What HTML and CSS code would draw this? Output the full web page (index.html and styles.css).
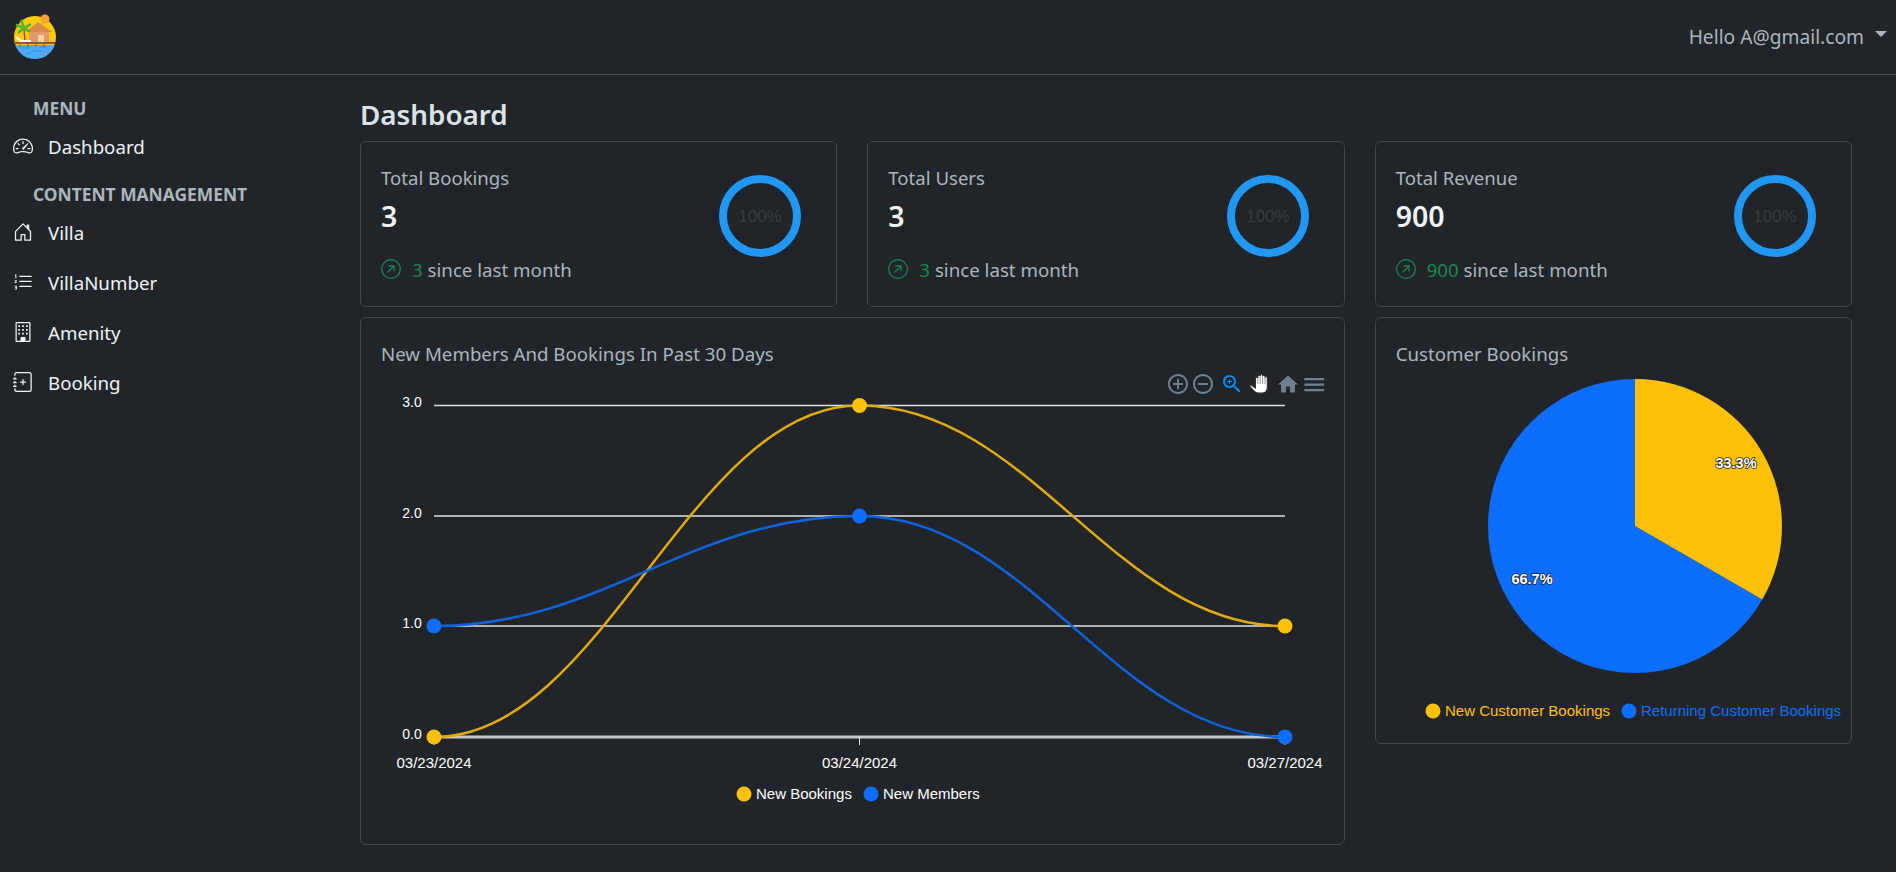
FILE: index.html
```html
<!DOCTYPE html>
<html lang="en">
<head>
    <meta charset="UTF-8">
    <meta name="viewport" content="width=device-width, initial-scale=1.0">
    <title>Dashboard</title>
    <link rel="stylesheet" href="styles.css">
</head>
<body>
    <header class="navbar">
        <svg class="logo" viewBox="0 0 46 46" width="46" height="46">
            <circle cx="23" cy="24" r="21" fill="#ffc90b"/>
            <path d="M3.200 32h39.600A21 21 0 0 1 3.200 32Z" fill="#4ea8f5"/>
            <path d="M9 35h8M20 38h10M28 34h7M14 40h5" stroke="#3a8fdc" stroke-width="1"/>
            <circle cx="33" cy="6" r="4.500" fill="#f7a531"/>
            <path d="M14 19 26 9 40 19Z" fill="#d98a4b"/>
            <rect x="17" y="19" width="20" height="11" fill="#e09a62"/>
            <rect x="26" y="22" width="6" height="8" fill="#fbd3a4"/>
            <rect x="2" y="29" width="41" height="2" fill="#8e5a34"/>
            <path d="M8 31v3M16 31v3M24 31v3M32 31v3" stroke="#8e5a34" stroke-width="1"/>
            <path d="M13 28 12 17" stroke="#8e5a34" stroke-width="1.500"/>
            <path d="M12 15 4 12M12 15 6 20M12 15 19 11M12 15 9 7M12 15 18 19" stroke="#4fb52d" stroke-width="2.500"/>
            <path d="M4 24 9 28H19" stroke="#fff" stroke-width="2" fill="none"/>
        </svg>
        <div class="user-menu">
            <span>Hello A@gmail.com</span>
            <i class="caret"></i>
        </div>
    </header>

    <div class="layout">
        <aside class="sidebar">
            <div class="menu-title first">MENU</div>
            <a class="menu-link">
                <svg class="menu-icon" viewBox="0 0 16 16"><path d="M8 4a.5.5 0 0 1 .5.5V6a.5.5 0 0 1-1 0V4.500A.5.5 0 0 1 8 4zM3.732 5.732a.5.5 0 0 1 .707 0l.915.914a.5.5 0 1 1-.708.708l-.914-.915a.5.5 0 0 1 0-.707zM2 10a.5.5 0 0 1 .5-.5h1.586a.5.5 0 0 1 0 1H2.500A.5.5 0 0 1 2 10zm9.500 0a.5.5 0 0 1 .5-.5h1.500a.5.5 0 0 1 0 1H12a.5.5 0 0 1-.5-.5zm.754-4.246a.389.389 0 0 0-.527-.02L7.547 9.310a.91.91 0 1 0 1.302 1.258l3.434-4.297a.389.389 0 0 0-.029-.518z"/><path fill-rule="evenodd" d="M0 10a8 8 0 1 1 15.547 2.661c-.442 1.253-1.845 1.602-2.932 1.250C11.309 13.488 9.475 13 8 13c-1.474 0-3.310.488-4.615.911-1.087.352-2.490.003-2.932-1.250A7.988 7.988 0 0 1 0 10zm8-7a7 7 0 0 0-6.603 9.329c.203.575.923.876 1.680.630C4.397 12.533 6.358 12 8 12s3.604.532 4.923.960c.757.245 1.477-.056 1.680-.631A7 7 0 0 0 8 3z"/></svg>
                Dashboard
            </a>
            <div class="menu-title">CONTENT MANAGEMENT</div>
            <a class="menu-link">
                <svg class="menu-icon" viewBox="0 0 16 16"><path d="M8.354 1.146a.5.5 0 0 0-.708 0l-6 6A.5.5 0 0 0 1.500 7.500v7a.5.5 0 0 0 .5.5h4.500a.5.5 0 0 0 .5-.5v-4h2v4a.5.5 0 0 0 .5.5H14a.5.5 0 0 0 .5-.5v-7a.5.5 0 0 0-.146-.354L13 5.793V2.500a.5.5 0 0 0-.5-.5h-1a.5.5 0 0 0-.5.5v1.293L8.354 1.146zM2.500 14V7.707l5.500-5.500 5.500 5.500V14H10v-4a.5.5 0 0 0-.5-.5h-3a.5.5 0 0 0-.5.5v4H2.500z"/></svg>
                Villa
            </a>
            <a class="menu-link">
                <svg class="menu-icon" viewBox="0 0 16 16"><path d="M5 11.500a.5.5 0 0 1 .5-.5h9a.5.5 0 0 1 0 1h-9a.5.5 0 0 1-.5-.5zm0-4a.5.5 0 0 1 .5-.5h9a.5.5 0 0 1 0 1h-9a.5.5 0 0 1-.5-.5zm0-4a.5.5 0 0 1 .5-.5h9a.5.5 0 0 1 0 1h-9a.5.5 0 0 1-.5-.5z"/><path d="M1.700 2h1v3h-.8V3H1.500ZM1.300 6.500h1.800v.7l-1 1h1v.6H1.300v-.6l1-1h-1ZM1.300 11h1.800v2.900H1.300v-.6h1V12.700h-.7V12.200h.7v-.6h-1Z"/></svg>
                VillaNumber
            </a>
            <a class="menu-link">
                <svg class="menu-icon" viewBox="0 0 16 16"><path d="M3 0h10a1 1 0 0 1 1 1v14a1 1 0 0 1-1 1H3a1 1 0 0 1-1-1V1a1 1 0 0 1 1-1zm0 1v14h3v-2.500a.5.5 0 0 1 .5-.5h3a.5.5 0 0 1 .5.5V15h3V1H3z"/><path d="M4.200 2.500h1.400v1.400H4.200zM7.300 2.500h1.400v1.400H7.300zM10.400 2.500h1.400v1.400h-1.400zM4.200 5.500h1.400v1.400H4.200zM7.300 5.500h1.400v1.400H7.300zM10.400 5.500h1.400v1.400h-1.400zM4.200 8.500h1.400v1.400H4.200zM7.300 8.500h1.400v1.400H7.300zM10.400 8.500h1.400v1.400h-1.400z"/></svg>
                Amenity
            </a>
            <a class="menu-link">
                <svg class="menu-icon" viewBox="0 0 16 16"><path d="M8 5.500a.5.5 0 0 1 .5.5v1.500H10a.5.5 0 0 1 0 1H8.500V10a.5.5 0 0 1-1 0V8.500H6a.5.5 0 0 1 0-1h1.500V6a.5.5 0 0 1 .5-.5z"/><path d="M3 0h10a2 2 0 0 1 2 2v12a2 2 0 0 1-2 2H3a2 2 0 0 1-2-2v-1h1v1a1 1 0 0 0 1 1h10a1 1 0 0 0 1-1V2a1 1 0 0 0-1-1H3a1 1 0 0 0-1 1v1H1V2a2 2 0 0 1 2-2z"/><path d="M1 5v-.5a.5.5 0 0 1 1 0V5h.5a.5.5 0 0 1 0 1h-2a.5.5 0 0 1 0-1H1zm0 3v-.5a.5.5 0 0 1 1 0V8h.5a.5.5 0 0 1 0 1h-2a.5.5 0 0 1 0-1H1zm0 3v-.5a.5.5 0 0 1 1 0v.5h.5a.5.5 0 0 1 0 1h-2a.5.5 0 0 1 0-1H1z"/></svg>
                Booking
            </a>
        </aside>

        <main class="content">
            <h1>Dashboard</h1>
            <div class="card-grid">
                <section class="card stat-card">
                    <div>
                        <div class="stat-title">Total Bookings</div>
                        <div class="stat-value">3</div>
                        <div class="stat-trend">
                            <svg class="trend-icon" viewBox="0 0 16 16"><path fill-rule="evenodd" d="M1 8a7 7 0 1 0 14 0A7 7 0 0 0 1 8zm15 0A8 8 0 1 1 0 8a8 8 0 0 1 16 0zM5.854 10.803a.5.5 0 1 1-.708-.707L9.243 6H6.475a.5.5 0 1 1 0-1h3.975a.5.5 0 0 1 .5.5v3.975a.5.5 0 1 1-1 0V6.707l-4.096 4.096z"/></svg>
                            <span><span class="trend-num">3</span> since last month</span>
                        </div>
                    </div>
                    <svg class="ring" viewBox="0 0 82 82"><circle cx="41" cy="41" r="37"/><text x="41" y="47">100%</text></svg>
                </section>
                <section class="card stat-card">
                    <div>
                        <div class="stat-title">Total Users</div>
                        <div class="stat-value">3</div>
                        <div class="stat-trend">
                            <svg class="trend-icon" viewBox="0 0 16 16"><path fill-rule="evenodd" d="M1 8a7 7 0 1 0 14 0A7 7 0 0 0 1 8zm15 0A8 8 0 1 1 0 8a8 8 0 0 1 16 0zM5.854 10.803a.5.5 0 1 1-.708-.707L9.243 6H6.475a.5.5 0 1 1 0-1h3.975a.5.5 0 0 1 .5.5v3.975a.5.5 0 1 1-1 0V6.707l-4.096 4.096z"/></svg>
                            <span><span class="trend-num">3</span> since last month</span>
                        </div>
                    </div>
                    <svg class="ring" viewBox="0 0 82 82"><circle cx="41" cy="41" r="37"/><text x="41" y="47">100%</text></svg>
                </section>
                <section class="card stat-card">
                    <div>
                        <div class="stat-title">Total Revenue</div>
                        <div class="stat-value">900</div>
                        <div class="stat-trend">
                            <svg class="trend-icon" viewBox="0 0 16 16"><path fill-rule="evenodd" d="M1 8a7 7 0 1 0 14 0A7 7 0 0 0 1 8zm15 0A8 8 0 1 1 0 8a8 8 0 0 1 16 0zM5.854 10.803a.5.5 0 1 1-.708-.707L9.243 6H6.475a.5.5 0 1 1 0-1h3.975a.5.5 0 0 1 .5.5v3.975a.5.5 0 1 1-1 0V6.707l-4.096 4.096z"/></svg>
                            <span><span class="trend-num">900</span> since last month</span>
                        </div>
                    </div>
                    <svg class="ring" viewBox="0 0 82 82"><circle cx="41" cy="41" r="37"/><text x="41" y="47">100%</text></svg>
                </section>

                <section class="card chart-card">
                    <div class="chart-title">New Members And Bookings In Past 30 Days</div>
                    <svg class="chart" viewBox="361 370 983 473" width="983" height="473">
                        <g class="grid">
                            <line x1="434" x2="1285" y1="405.500" y2="405.500"/>
                            <line x1="434" x2="1285" y1="516" y2="516"/>
                            <line x1="434" x2="1285" y1="626" y2="626"/>
                        </g>
                        <line class="axis" x1="434" x2="1285" y1="737" y2="737"/>
                        <g class="tick">
                            <line x1="434" x2="434" y1="737" y2="745"/>
                            <line x1="859.500" x2="859.500" y1="737" y2="745"/>
                            <line x1="1285" x2="1285" y1="737" y2="745"/>
                        </g>
                        <g class="chart-text y-labels">
                            <text x="412" y="407">3.0</text>
                            <text x="412" y="518">2.0</text>
                            <text x="412" y="628">1.0</text>
                            <text x="412" y="739">0.0</text>
                        </g>
                        <g class="chart-text x-labels">
                            <text x="434" y="768">03/23/2024</text>
                            <text x="859.500" y="768">03/24/2024</text>
                            <text x="1285" y="768">03/27/2024</text>
                        </g>
                        <path class="line yellow" d="M434 737C604 737 689 405.500 859.500 405.500C1030 405.500 1115 626 1285 626"/>
                        <path class="line blue" d="M434 626C604 626 689 516 859.500 516C1030 516 1115 737 1285 737"/>
                        <circle class="dot-blue" cx="434" cy="626" r="7.500"/>
                        <circle class="dot-blue" cx="859.500" cy="516" r="7.500"/>
                        <circle class="dot-blue" cx="1285" cy="737" r="7.500"/>
                        <circle class="dot-yellow" cx="434" cy="737" r="7.500"/>
                        <circle class="dot-yellow" cx="859.500" cy="405.500" r="7.500"/>
                        <circle class="dot-yellow" cx="1285" cy="626" r="7.500"/>

                        <circle class="dot-yellow" cx="744" cy="794" r="7.500"/>
                        <text class="chart-text" x="756" y="799">New Bookings</text>
                        <circle class="dot-blue" cx="871" cy="794" r="7.500"/>
                        <text class="chart-text" x="883" y="799">New Members</text>

                        <g class="toolbar">
                            <g transform="translate(1166 372)"><path d="M13 7h-2v4H7v2h4v4h2v-4h4v-2h-4V7zm-1-5C6.480 2 2 6.480 2 12s4.480 10 10 10 10-4.480 10-10S17.520 2 12 2zm0 18c-4.410 0-8-3.590-8-8s3.590-8 8-8 8 3.590 8 8-3.590 8-8 8z"/></g>
                            <g transform="translate(1191 372)"><path d="M7 11v2h10v-2H7zm5-9C6.480 2 2 6.480 2 12s4.480 10 10 10 10-4.480 10-10S17.520 2 12 2zm0 18c-4.410 0-8-3.590-8-8s3.590-8 8-8 8 3.590 8 8-3.590 8-8 8z"/></g>
                            <g transform="translate(1220 372)" class="tool-active"><path d="M15.500 14h-.79l-.28-.27C15.410 12.590 16 11.110 16 9.500 16 5.910 13.090 3 9.500 3S3 5.910 3 9.500 5.910 16 9.500 16c1.610 0 3.090-.59 4.230-1.570l.27.28v.79l5 4.990L20.490 19l-4.990-5zm-6 0C7.010 14 5 11.990 5 9.500S7.010 5 9.500 5 14 7.010 14 9.500 11.990 14 9.500 14z"/><path d="M12 10h-2v2H9v-2H7V9h2V7h1v2h2v1z"/></g>
                            <g transform="translate(1276 372.500)"><path d="M10 20v-6h4v6h5v-8h3L12 3 2 12h3v8z"/></g>
                            <g transform="translate(1301 371.500) scale(1.100)"><path d="M3 18h18v-2H3v2zm0-5h18v-2H3v2zm0-7v2h18V6H3z"/></g>
                        </g>
                        <g transform="translate(1250 374) scale(1.200 1)">
                            <path class="hand" d="M1 11 4.500 14V4C4.500 3 6.500 3 6.500 4V2C6.500 1 8.500 1 8.500 2V1C8.500 0 10.500 0 10.500 1V2C10.500 1 12.500 1 12.500 2V3.500C12.500 2.500 14.500 2.500 14.500 3.500V13C14.500 16 13 19 10 19H7C5 19 4 18 3 16.500L.3 13C-.5 12 .2 10.500 1 11Z"/>
                            <path class="hand-line" d="M6.500 4V10M8.500 2V10M10.500 2V10M12.500 3V10"/>
                        </g>
                    </svg>
                </section>

                <section class="card pie-card">
                    <div class="chart-title">Customer Bookings</div>
                    <svg class="chart" viewBox="1376 370 475 372" width="475" height="372">
                        <path fill="#0d6efd" d="M1635 526V379A147 147 0 1 0 1762.300 599.500Z"/>
                        <path fill="#ffc107" d="M1635 526V379A147 147 0 0 1 1762.300 599.500Z"/>
                        <text class="pie-label" x="1736" y="468">33.3%</text>
                        <text class="pie-label" x="1532" y="584">66.7%</text>
                        <circle class="dot-yellow" cx="1433" cy="711" r="7.500"/>
                        <text class="pie-legend legend-yellow" x="1445" y="716">New Customer Bookings</text>
                        <circle class="dot-blue" cx="1629" cy="711" r="7.500"/>
                        <text class="pie-legend legend-blue" x="1641" y="716">Returning Customer Bookings</text>
                    </svg>
                </section>
            </div>
        </main>
    </div>
</body>
</html>
```

FILE: styles.css
```css
body {
    margin: 0;
    background-color: #212529;
    color: #dee2e6;
    font-family: "Noto Sans", "Open Sans", sans-serif;
    height: 872px;
    overflow: hidden;
}

/* top bar */
.navbar {
    height: 74px;
    border-bottom: 1px solid #495057;
    display: flex;
    align-items: center;
    justify-content: space-between;
    padding: 0 9px 0 12px;
}
.logo {
    display: block;
    margin-bottom: 2px;
}
.user-menu {
    display: flex;
    align-items: center;
    color: #adb5bd;
    font-size: 19.200px;
    margin-bottom: 2px;
}
.caret {
    width: 0;
    height: 0;
    margin-left: 11px;
    margin-bottom: 4px;
    border-top: 6px solid #adb5bd;
    border-left: 6px solid transparent;
    border-right: 6px solid transparent;
}

.layout {
    display: flex;
}

/* sidebar */
.sidebar {
    width: 360px;
    flex-shrink: 0;
    box-sizing: border-box;
    padding-left: 13px;
}
.menu-title {
    font-size: 17.400px;
    font-weight: 700;
    color: #adb5bd;
    padding-left: 20px;
    line-height: 22px;
    margin-top: 12px;
}
.menu-title.first {
    margin-top: 22px;
}
.menu-link {
    display: flex;
    align-items: center;
    height: 50px;
    font-size: 18.700px;
    color: #f0f3f5;
}
.menu-title + .menu-link {
    margin-top: 2px;
}
.menu-icon {
    width: 20px;
    height: 20px;
    fill: currentColor;
    margin-right: 15px;
    flex-shrink: 0;
}

/* main area */
.content {
    width: 1492px;
}
h1 {
    margin: 0;
    box-sizing: border-box;
    height: 66px;
    padding-top: 13px;
    font-size: 27.800px;
    font-weight: 600;
    line-height: 52px;
    color: #dee2e6;
}
.card-grid {
    display: grid;
    grid-template-columns: repeat(3, 1fr);
    column-gap: 30px;
    row-gap: 10px;
    align-items: start;
}
.card {
    border: 1px solid #43474c;
    border-radius: 6px;
    box-sizing: border-box;
}
.stat-card {
    height: 166px;
    display: flex;
    justify-content: space-between;
    padding: 20px 35px 0 20px;
}
.stat-title {
    font-size: 18.600px;
    line-height: 32px;
    color: #adb5bd;
}
.stat-value {
    font-size: 28.500px;
    font-weight: 600;
    line-height: 44px;
    color: #f0f3f5;
}
.stat-trend {
    display: flex;
    align-items: center;
    margin-top: 14px;
    height: 34px;
    font-size: 18.700px;
    color: #adb5bd;
}
.trend-icon {
    width: 20px;
    height: 20px;
    fill: #198754;
    margin-right: 11px;
}
.trend-num {
    color: #198754;
}
.ring {
    width: 82px;
    height: 82px;
    margin-top: 13px;
}
.ring circle {
    fill: none;
    stroke: #2196f3;
    stroke-width: 8;
}
.ring text {
    font-family: "Liberation Sans", sans-serif;
    font-size: 17px;
    text-anchor: middle;
    fill: #373b40;
}

/* charts */
.chart-card {
    grid-column: span 2;
    height: 528px;
}
.pie-card {
    height: 427px;
}
.chart-title {
    height: 52px;
    box-sizing: border-box;
    padding: 20px 0 0 20px;
    font-size: 18.700px;
    line-height: 32px;
    color: #adb5bd;
}
.chart {
    display: block;
}
.grid line {
    stroke: #e0e0e0;
    stroke-width: 1.500;
}
.axis {
    stroke: #c8c8c8;
    stroke-width: 3;
}
.tick line {
    stroke: #e0e0e0;
}
.chart-text {
    font-family: "Liberation Sans", sans-serif;
    font-size: 15px;
    fill: #fff;
}
.y-labels text {
    text-anchor: middle;
    font-size: 14px;
}
.x-labels text {
    text-anchor: middle;
}
.line {
    fill: none;
    stroke-width: 2.500;
}
.yellow {
    stroke: #e1ab10;
}
.blue {
    stroke: #0f62dc;
}
.dot-yellow {
    fill: #ffc107;
}
.dot-blue {
    fill: #0d6efd;
}
.toolbar {
    fill: #6e8192;
}
.toolbar .tool-active {
    fill: #008ffb;
}
.hand {
    fill: #fff;
    stroke: #333;
    stroke-width: 1;
}
.hand-line {
    fill: none;
    stroke: #777;
    stroke-width: .7;
}
.pie-label {
    font-family: "Liberation Sans", sans-serif;
    font-size: 14.500px;
    font-weight: 700;
    fill: #fff;
    text-anchor: middle;
    paint-order: stroke;
    stroke: #222;
    stroke-width: 1.500px;
}
.pie-legend {
    font-family: "Liberation Sans", sans-serif;
    font-size: 15px;
}
.legend-yellow {
    fill: #ffc107;
}
.legend-blue {
    fill: #0d6efd;
}
```
